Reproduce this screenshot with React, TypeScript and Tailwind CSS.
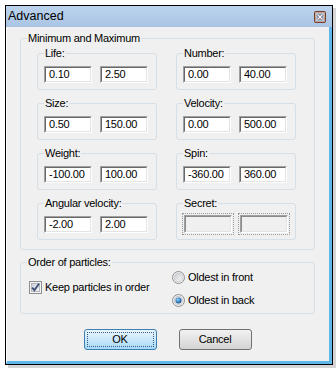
import React from 'react';

function Field({ value }: { value: string }) {
  return (
    <div className="w-[48px] h-[17px] border border-t-[#a0a0a0] border-l-[#a0a0a0] border-r-white border-b-white">
      <div className="h-full border border-t-[#696969] border-l-[#696969] border-r-[#e3e3e3] border-b-[#e3e3e3] bg-white pl-[3px] leading-[13px]">
        {value}
      </div>
    </div>
  );
}

function DisabledField() {
  return (
    <div className="w-[52px] h-[22px] border border-dotted border-[#9a9a9a] p-[1px]">
      <div className="h-full border border-t-[#a0a0a0] border-l-[#a0a0a0] border-r-white border-b-white">
        <div className="h-full border border-t-[#8a8a8a] border-l-[#8a8a8a] border-r-[#e3e3e3] border-b-[#e3e3e3] bg-[#f0f0f0]" />
      </div>
    </div>
  );
}

function Group({ label, children }: { label: string; children: React.ReactNode }) {
  return (
    <fieldset className="border border-[#d5dfe5] rounded-[3px] px-[6px] pt-[6px] pb-[6px]">
      <legend className="px-[1px] leading-[14px]">{label}</legend>
      {children}
    </fieldset>
  );
}

function Pair({ min, max }: { min: string; max: string }) {
  return (
    <div className="flex gap-[8px]">
      <Field value={min} />
      <Field value={max} />
    </div>
  );
}

function CheckBox() {
  return (
    <svg width="13" height="13" viewBox="0 0 13 13">
      <defs>
        <linearGradient id="cbg" x1="0" y1="0" x2="1" y2="1">
          <stop offset="0" stopColor="#cbcfd5" />
          <stop offset="1" stopColor="#f6f6f6" />
        </linearGradient>
      </defs>
      <rect x="0.5" y="0.5" width="12" height="12" fill="#f4f4f4" stroke="#8f8f8f" />
      <rect x="2.5" y="2.5" width="8" height="8" fill="url(#cbg)" stroke="#b4b8be" />
      <path d="M3.2 6.6 L5.4 9.2 L10 2.8" stroke="#3d4f78" strokeWidth="1.8" fill="none" />
    </svg>
  );
}

function Radio({ checked }: { checked?: boolean }) {
  return (
    <svg width="13" height="13" viewBox="0 0 13 13">
      <defs>
        <linearGradient id="rbg" x1="0" y1="0" x2="1" y2="1">
          <stop offset="0" stopColor="#c8ccd2" />
          <stop offset="1" stopColor="#f7f7f7" />
        </linearGradient>
        <radialGradient id="rdot" cx="0.4" cy="0.35" r="0.7">
          <stop offset="0" stopColor="#9ed3f7" />
          <stop offset="0.6" stopColor="#2f7fc0" />
          <stop offset="1" stopColor="#1c4f7c" />
        </radialGradient>
      </defs>
      <circle cx="6.5" cy="6.5" r="6" fill="#f2f2f2" stroke="#8f8f8f" />
      <circle cx="6.5" cy="6.5" r="4.3" fill="url(#rbg)" stroke="#c0c4c9" strokeWidth="0.8" />
      {checked && <circle cx="6.5" cy="6.5" r="3" fill="url(#rdot)" />}
    </svg>
  );
}

function CloseIcon() {
  return (
    <svg width="12" height="12" viewBox="0 0 12 12">
      <rect x="0.5" y="0.5" width="11" height="11" rx="1" fill="#c98a6c" stroke="#7a3a28" />
      <rect x="1.5" y="1.5" width="9" height="9" fill="#b9c3d3" />
      <path d="M3.5 3.5 L8.5 8.5 M8.5 3.5 L3.5 8.5" stroke="#4a4a5a" strokeWidth="2.6" />
      <path d="M3.5 3.5 L8.5 8.5 M8.5 3.5 L3.5 8.5" stroke="#ffffff" strokeWidth="1.4" />
    </svg>
  );
}

export default function App() {
  return (
    <div className="w-[336px] h-[369px] bg-white pl-[5px] pt-[5px] font-['Liberation_Sans',Arial,sans-serif] text-[11px] tracking-[-0.25px] text-black">
      <div className="w-[328px] h-[360px] border border-black flex flex-col shadow-[3px_3px_0_#d6d6d6]">
        <div className="h-[21px] shrink-0 bg-gradient-to-b from-[#bcd3ec] to-[#a9c4e3] flex items-center justify-between pl-[2px] pr-[6px]">
          <span className="text-[12.5px] tracking-normal">Advanced</span>
          <CloseIcon />
        </div>

        <div className="flex-1 bg-[#f0f0f0] border-l border-l-white border-r-[3px] border-r-[#62b7ea] border-b-[3px] border-b-[#62b7ea] pl-[13px] pr-[14px] pt-[4px]">
          <fieldset className="border border-[#d5dfe5] rounded-[3px] pl-[16px] pr-[18px] pt-[1px] pb-[9px]">
            <legend className="-ml-[10px] px-[1px] leading-[14px]">Minimum and Maximum</legend>
            <div className="grid grid-cols-[120px_120px] gap-x-[19px] gap-y-[6px]">
              <Group label="Life:">
                <Pair min="0.10" max="2.50" />
              </Group>
              <Group label="Number:">
                <Pair min="0.00" max="40.00" />
              </Group>
              <Group label="Size:">
                <Pair min="0.50" max="150.00" />
              </Group>
              <Group label="Velocity:">
                <Pair min="0.00" max="500.00" />
              </Group>
              <Group label="Weight:">
                <Pair min="-100.00" max="100.00" />
              </Group>
              <Group label="Spin:">
                <Pair min="-360.00" max="360.00" />
              </Group>
              <Group label="Angular velocity:">
                <Pair min="-2.00" max="2.00" />
              </Group>
              <Group label="Secret:">
                <div className="flex gap-[4px] -mx-[1px] -mt-[3px] -mb-[2px]">
                  <DisabledField />
                  <DisabledField />
                </div>
              </Group>
            </div>
          </fieldset>

          <fieldset className="mt-[5px] border border-[#d5dfe5] rounded-[3px] pl-[8px] pt-[2px] pb-[6px]">
            <legend className="-ml-[2px] px-[1px] leading-[14px]">Order of particles:</legend>
            <div className="flex">
              <label className="w-[143px] mt-[10px] flex items-center gap-[3px] h-[13px]">
                <CheckBox />
                <span>Keep particles in order</span>
              </label>
              <div className="flex flex-col gap-[10px]">
                <label className="flex items-center gap-[3px] h-[13px]">
                  <Radio />
                  <span>Oldest in front</span>
                </label>
                <label className="flex items-center gap-[3px] h-[13px]">
                  <Radio checked />
                  <span>Oldest in back</span>
                </label>
              </div>
            </div>
          </fieldset>

          <div className="mt-[15px] flex justify-center gap-[22px]">
            <button className="w-[73px] h-[21px] rounded-[3px] border border-[#3c7fb1] bg-gradient-to-b from-[#eaf6fd] to-[#a7d9f5] p-[2px]">
              <div className="h-full border border-dotted border-[#3a5f8a] flex items-center justify-center leading-none">OK</div>
            </button>
            <button className="w-[73px] h-[21px] rounded-[3px] border border-[#707070] bg-gradient-to-b from-[#f2f2f2] to-[#d4d4d4] flex items-center justify-center leading-none">
              Cancel
            </button>
          </div>
        </div>
      </div>
    </div>
  );
}
